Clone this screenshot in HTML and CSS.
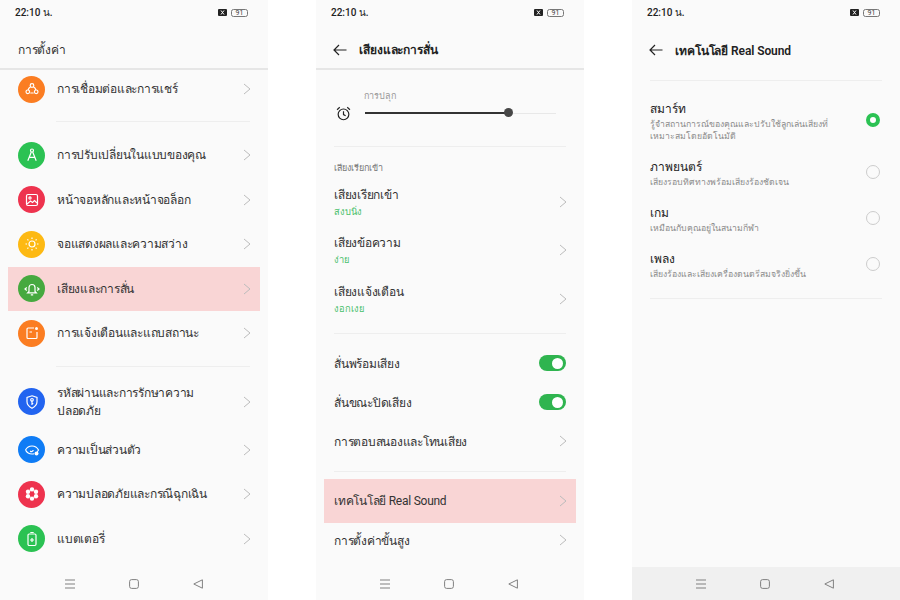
FILE: index.html
```html
<!DOCTYPE html>
<html lang="th">
<head>
<meta charset="utf-8">
<title>การตั้งค่า</title>
<link rel="stylesheet" href="styles.css">
</head>
<body>
<div class="stage">

<section class="phone">
  <div class="status"><span class="time">22:10 น.</span><span class="status-icons"><svg class="x-box" viewBox="0 0 9 7"><rect width="9" height="7" rx="1"/><path d="M3 1.500l3 4M6 1.500l-3 4"/></svg><span class="batt">91</span></span></div>
  <header class="top-plain">การตั้งค่า</header>
  <div class="list list-main">
    <div class="m-row first"><span class="ic orange"><svg viewBox="0 0 16 16"><circle cx="8" cy="4.500" r="1.800"/><circle cx="3.800" cy="10.800" r="1.800"/><circle cx="12.200" cy="10.800" r="1.800"/><path d="M6.600 5.800c-1.300.7-2.200 1.800-2.500 3.200M9.400 5.800c1.300.7 2.200 1.800 2.500 3.200M6.300 12h3.400"/></svg></span><span class="m-label">การเชื่อมต่อและการแชร์</span><svg class="chev" viewBox="0 0 8 12"><path d="M1 1l6 5-6 5"/></svg></div>
    <div class="m-sep s1"></div>
    <div class="m-row"><span class="ic green"><svg viewBox="0 0 16 16"><circle cx="8" cy="3.500" r="1.500"/><path d="M7.300 5 3.800 13.800M8.700 5l3.500 8.800M5.200 10.300h5.600"/></svg></span><span class="m-label">การปรับเปลี่ยนในแบบของคุณ</span><svg class="chev" viewBox="0 0 8 12"><path d="M1 1l6 5-6 5"/></svg></div>
    <div class="m-row"><span class="ic red"><svg viewBox="0 0 16 16"><rect x="2.500" y="2.500" width="11" height="11" rx="1.500"/><circle cx="6" cy="6" r="1.100"/><path d="M3 12l3.500-3 2 1.500 2-2 2.500 2.500"/></svg></span><span class="m-label">หน้าจอหลักและหน้าจอล็อก</span><svg class="chev" viewBox="0 0 8 12"><path d="M1 1l6 5-6 5"/></svg></div>
    <div class="m-row"><span class="ic yellow"><svg viewBox="0 0 16 16"><circle cx="8" cy="8" r="3"/><path d="M8 1.500v1.500M8 13v1.500M1.500 8H3M13 8h1.500M3.400 3.400l1 1M11.600 11.600l1 1M3.400 12.600l1-1M11.600 4.400l1-1"/></svg></span><span class="m-label">จอแสดงผลและความสว่าง</span><svg class="chev" viewBox="0 0 8 12"><path d="M1 1l6 5-6 5"/></svg></div>
    <div class="m-row hl"><span class="ic lime"><svg viewBox="0 0 16 16"><path d="M5 10.500V6.500a3 3 0 0 1 6 0v4l1.300 1.300H3.700zM6.800 13.800h2.400M2.800 6.500 1 8l1.800 1.500M13.200 6.500 15 8l-1.800 1.500"/></svg></span><span class="m-label">เสียงและการสั่น</span><svg class="chev" viewBox="0 0 8 12"><path d="M1 1l6 5-6 5"/></svg></div>
    <div class="m-row"><span class="ic orange"><svg viewBox="0 0 16 16"><path d="M10 3H4a1 1 0 0 0-1 1v8.500a1 1 0 0 0 1 1h8a1 1 0 0 0 1-1V7M5.500 7H8"/><circle class="dot" cx="12.500" cy="3.500" r="1.500"/></svg></span><span class="m-label">การแจ้งเตือนและแถบสถานะ</span><svg class="chev" viewBox="0 0 8 12"><path d="M1 1l6 5-6 5"/></svg></div>
    <div class="m-sep s2"></div>
    <div class="m-row tall"><span class="ic blue"><svg viewBox="0 0 16 16"><path d="M8 1.800 13 3.500v4.200c0 3-2.200 5-5 6.500-2.800-1.500-5-3.500-5-6.500V3.500z"/><path d="M8 7v4M8 9.500h1.300"/><circle cx="8" cy="5.800" r="1.300"/></svg></span><span class="m-label">รหัสผ่านและการรักษาความปลอดภัย</span><svg class="chev" viewBox="0 0 8 12"><path d="M1 1l6 5-6 5"/></svg></div>
    <div class="m-row"><span class="ic azure"><svg viewBox="0 0 16 16"><path d="M1.500 8C3 5.200 5.300 4 8 4s5 1.200 6.500 4c-.4.700-.8 1.300-1.300 1.800M10 11.700c-.6.200-1.300.3-2 .3-2.700 0-5-1.200-6.500-4"/><path d="M9.200 8a1.700 1.700 0 0 1-3 1"/><circle class="dot" cx="12.500" cy="11.500" r="2"/></svg></span><span class="m-label">ความเป็นส่วนตัว</span><svg class="chev" viewBox="0 0 8 12"><path d="M1 1l6 5-6 5"/></svg></div>
    <div class="m-row"><span class="ic red"><svg viewBox="0 0 16 16"><g class="dot"><circle cx="8" cy="3.400" r="2.200"/><circle cx="8" cy="12.600" r="2.200"/><circle cx="4" cy="5.700" r="2.200"/><circle cx="12" cy="5.700" r="2.200"/><circle cx="4" cy="10.300" r="2.200"/><circle cx="12" cy="10.300" r="2.200"/></g><circle class="hole" cx="8" cy="8" r="2.200"/></svg></span><span class="m-label">ความปลอดภัยและกรณีฉุกเฉิน</span><svg class="chev" viewBox="0 0 8 12"><path d="M1 1l6 5-6 5"/></svg></div>
    <div class="m-row"><span class="ic green"><svg viewBox="0 0 16 16"><rect x="4" y="3" width="8" height="11.500" rx="1.200"/><path d="M6.300 1.500h3.400M8 7v4M6 9h4"/></svg></span><span class="m-label">แบตเตอรี่</span><svg class="chev" viewBox="0 0 8 12"><path d="M1 1l6 5-6 5"/></svg></div>
  </div>
  <nav class="navbar"><svg viewBox="0 0 10 10"><path d="M0 1h10M0 5h10M0 9h10"/></svg><svg viewBox="0 0 10 10"><rect x=".6" y=".6" width="8.800" height="8.800" rx="2"/></svg><svg viewBox="0 0 10 10"><path d="M9.400 .8v8.400L.8 5z"/></svg></nav>
</section>

<section class="phone">
  <div class="status"><span class="time">22:10 น.</span><span class="status-icons"><svg class="x-box" viewBox="0 0 9 7"><rect width="9" height="7" rx="1"/><path d="M3 1.500l3 4M6 1.500l-3 4"/></svg><span class="batt">91</span></span></div>
  <header class="top-back"><svg class="back" viewBox="0 0 14 12"><path d="M13.500 6H1M6 1 1 6l5 5"/></svg><span>เสียงและการสั่น</span></header>
  <div class="alarm">
    <div class="alarm-label">การปลุก</div>
    <div class="alarm-row">
      <svg class="clock" viewBox="0 0 14 14"><circle cx="7" cy="7.800" r="5"/><path d="M7 5v3l2 1.200M1 3.500 3.500 1.200M13 3.500 10.500 1.200"/></svg>
      <div class="track"><div class="fill"></div><div class="knob"></div></div>
    </div>
  </div>
  <div class="sep"></div>
  <div class="group-title">เสียงเรียกเข้า</div>
  <div class="two"><div class="tx"><div class="t">เสียงเรียกเข้า</div><div class="v">สงบนิ่ง</div></div><svg class="chev" viewBox="0 0 8 12"><path d="M1 1l6 5-6 5"/></svg></div>
  <div class="two"><div class="tx"><div class="t">เสียงข้อความ</div><div class="v">ง่าย</div></div><svg class="chev" viewBox="0 0 8 12"><path d="M1 1l6 5-6 5"/></svg></div>
  <div class="two"><div class="tx"><div class="t">เสียงแจ้งเตือน</div><div class="v">งอกเงย</div></div><svg class="chev" viewBox="0 0 8 12"><path d="M1 1l6 5-6 5"/></svg></div>
  <div class="sep sep-b"></div>
  <div class="one"><span>สั่นพร้อมเสียง</span><span class="switch"></span></div>
  <div class="one"><span>สั่นขณะปิดเสียง</span><span class="switch"></span></div>
  <div class="one"><span>การตอบสนองและโทนเสียง</span><svg class="chev" viewBox="0 0 8 12"><path d="M1 1l6 5-6 5"/></svg></div>
  <div class="sep sep-c"></div>
  <div class="one hl2"><span>เทคโนโลยี Real Sound</span><svg class="chev" viewBox="0 0 8 12"><path d="M1 1l6 5-6 5"/></svg></div>
  <div class="one last"><span>การตั้งค่าขั้นสูง</span><svg class="chev" viewBox="0 0 8 12"><path d="M1 1l6 5-6 5"/></svg></div>
  <nav class="navbar shift"><svg viewBox="0 0 10 10"><path d="M0 1h10M0 5h10M0 9h10"/></svg><svg viewBox="0 0 10 10"><rect x=".6" y=".6" width="8.800" height="8.800" rx="2"/></svg><svg viewBox="0 0 10 10"><path d="M9.400 .8v8.400L.8 5z"/></svg></nav>
</section>

<section class="phone">
  <div class="status"><span class="time">22:10 น.</span><span class="status-icons"><svg class="x-box" viewBox="0 0 9 7"><rect width="9" height="7" rx="1"/><path d="M3 1.500l3 4M6 1.500l-3 4"/></svg><span class="batt">91</span></span></div>
  <header class="top-back no-line"><svg class="back" viewBox="0 0 14 12"><path d="M13.500 6H1M6 1 1 6l5 5"/></svg><span>เทคโนโลยี Real Sound</span></header>
  <div class="sep sep-d"></div>
  <div class="opt first-opt"><div class="tx"><div class="ot">สมาร์ท</div><div class="od">รู้จำสถานการณ์ของคุณและปรับใช้ลูกเล่นเสียงที่เหมาะสมโดยอัตโนมัติ</div></div><span class="radio on"></span></div>
  <div class="opt"><div class="tx"><div class="ot">ภาพยนตร์</div><div class="od">เสียงรอบทิศทางพร้อมเสียงร้องชัดเจน</div></div><span class="radio"></span></div>
  <div class="opt"><div class="tx"><div class="ot">เกม</div><div class="od">เหมือนกับคุณอยู่ในสนามกีฬา</div></div><span class="radio"></span></div>
  <div class="opt"><div class="tx"><div class="ot">เพลง</div><div class="od">เสียงร้องและเสียงเครื่องดนตรีสมจริงยิ่งขึ้น</div></div><span class="radio"></span></div>
  <div class="sep sep-e"></div>
  <nav class="navbar shift grey"><svg viewBox="0 0 10 10"><path d="M0 1h10M0 5h10M0 9h10"/></svg><svg viewBox="0 0 10 10"><rect x=".6" y=".6" width="8.800" height="8.800" rx="2"/></svg><svg viewBox="0 0 10 10"><path d="M9.400 .8v8.400L.8 5z"/></svg></nav>
</section>

</div>
</body>
</html>
```
FILE: styles.css
```css
* { box-sizing: border-box; }
html, body { margin: 0; padding: 0; background: #fff; }
body { font-family: Roboto, "Noto Sans", "Liberation Sans", sans-serif; color: #2b2b2b; }
.stage { width: 900px; height: 600px; display: flex; justify-content: space-between; overflow: hidden; }
.phone { width: 268px; height: 600px; background: #fafafa; display: flex; flex-direction: column; position: relative; overflow: hidden; }

.status { height: 25px; padding: 0 20px 0 15px; display: flex; justify-content: space-between; align-items: center; flex: none; }
.time { font-size: 10px; font-weight: 500; color: #222; }
.status-icons { display: flex; align-items: center; gap: 4px; }
.x-box { width: 9px; height: 7px; fill: #222; stroke: none; }
.x-box path { stroke: #fafafa; stroke-width: 1; fill: none; }
.batt { width: 17px; height: 8px; border: 1px solid #777; border-radius: 2.500px; font-size: 7px; line-height: 6px; text-align: center; color: #444; }

.top-plain { height: 45px; padding: 6px 18px 0; display: flex; align-items: center; font-size: 12px; letter-spacing: -.25px; border-bottom: 2px solid #e6e6e6; color: #333; flex: none; }
.top-back { height: 45px; padding: 6px 0 0 17px; display: flex; align-items: center; gap: 12px; font-size: 12px; font-weight: 600; letter-spacing: -.1px; border-bottom: 2px solid #e6e6e6; color: #222; flex: none; }
.top-back.no-line { border-bottom: 0; height: 44px; padding-top: 6px; }
.back { width: 14px; height: 12px; fill: none; stroke: #222; stroke-width: 1.200; flex: none; }

.list-main { padding: 0 8px; flex: 1; }
.m-row { height: 44.500px; display: flex; align-items: center; padding: 0 9px 0 10px; }
.m-row.first { height: 38px; }
.m-row.tall { height: 52px; }
.m-label { flex: 1; font-size: 12px; letter-spacing: -.25px; padding-left: 12px; line-height: 18px; padding-right: 28px; color: #333; }
.ic { width: 27px; height: 27px; border-radius: 50%; display: flex; align-items: center; justify-content: center; flex: none; }
.ic svg { width: 16px; height: 16px; fill: none; stroke: #fff; stroke-width: 1.200; }
.ic .dot { fill: #fff; stroke: none; }
.red .hole { fill: #ee334e; stroke: none; }
.orange { background: #fb7d22; }
.green { background: #2bc253; }
.red { background: #ee334e; }
.yellow { background: #fdb913; }
.lime { background: #46a93f; }
.blue { background: #2264f0; }
.azure { background: #0f7cf5; }
.hl { background: #f9d5d5; }
.m-sep { height: 1px; background: #eee; margin: 0 10px 0 48px; }
.s1 { margin-top: 13px; margin-bottom: 11px; }
.s2 { margin-top: 10px; margin-bottom: 9px; }
.chev { width: 8px; height: 12px; flex: none; fill: none; stroke: #bcbcbc; stroke-width: 1; }

.alarm { padding: 0 0 0 20px; height: 76px; flex: none; }
.alarm-label { font-size: 9px; color: #999; padding: 20px 0 0 28px; line-height: 12px; }
.alarm-row { display: flex; align-items: center; gap: 14px; margin-top: 4px; }
.clock { width: 15px; height: 15px; fill: none; stroke: #222; stroke-width: 1.100; flex: none; }
.track { width: 191px; height: 1px; background: #e8e8e8; position: relative; }
.fill { width: 143px; height: 2px; background: #333; margin-top: -1px; }
.knob { position: absolute; left: 139px; top: -5px; width: 9px; height: 9px; border-radius: 50%; background: #474747; }

.sep { height: 1px; background: #eee; margin: 0 18px; flex: none; }
.sep-b { margin-top: 10px; margin-bottom: 10px; }
.sep-c { margin-top: 10px; margin-bottom: 7px; }
.sep-d { margin-top: 11px; }
.sep-e { margin-top: 11px; }
.group-title { font-size: 9px; color: #777; padding: 15px 18px 4px; line-height: 12px; letter-spacing: -.05px; flex: none; }

.two { height: 48.300px; display: flex; align-items: center; justify-content: space-between; padding: 0 18px; flex: none; }
.t { font-size: 12px; line-height: 20px; letter-spacing: -.25px; color: #333; }
.v { font-size: 9.300px; line-height: 14px; color: #49c06a; }
.one { height: 39px; display: flex; align-items: center; justify-content: space-between; padding: 0 18px; font-size: 12px; letter-spacing: -.25px; color: #333; flex: none; }
.two .chev, .one .chev { margin-right: -1px; }
.hl2 { background: #f9d5d5; margin: 0 8px; padding: 0 10px; height: 44px; }
.last { height: 35px; }
.switch { width: 27px; height: 16px; border-radius: 8px; background: #2fb44f; position: relative; flex: none; }
.switch::after { content: ""; position: absolute; right: 3px; top: 2.500px; width: 11px; height: 11px; border-radius: 50%; background: #fff; }

.opt { display: flex; align-items: center; justify-content: space-between; padding: 0 20px 0 18px; height: 46px; flex: none; }
.first-opt { height: 58px; margin-top: 10px; }
.tx { flex: 1; }
.opt .tx { padding: 2px 30px 0 0; }
.ot { font-size: 12px; line-height: 18px; font-weight: 500; color: #222; }
.od { font-size: 8.700px; line-height: 12px; color: #8a8a8a; }
.radio { width: 14px; height: 14px; border-radius: 50%; border: 1px solid #ccc; flex: none; }
.radio.on { background: #fff; border: 4px solid #2bc253; }

.navbar { position: absolute; left: 0; right: 0; bottom: 0; height: 33px; display: flex; align-items: center; justify-content: center; gap: 54px; }
.navbar svg { width: 10px; height: 10px; fill: none; stroke: #808080; stroke-width: 1; }
.navbar.shift { padding-right: 2px; }
.grey { background: #f0f0f0; }
```
